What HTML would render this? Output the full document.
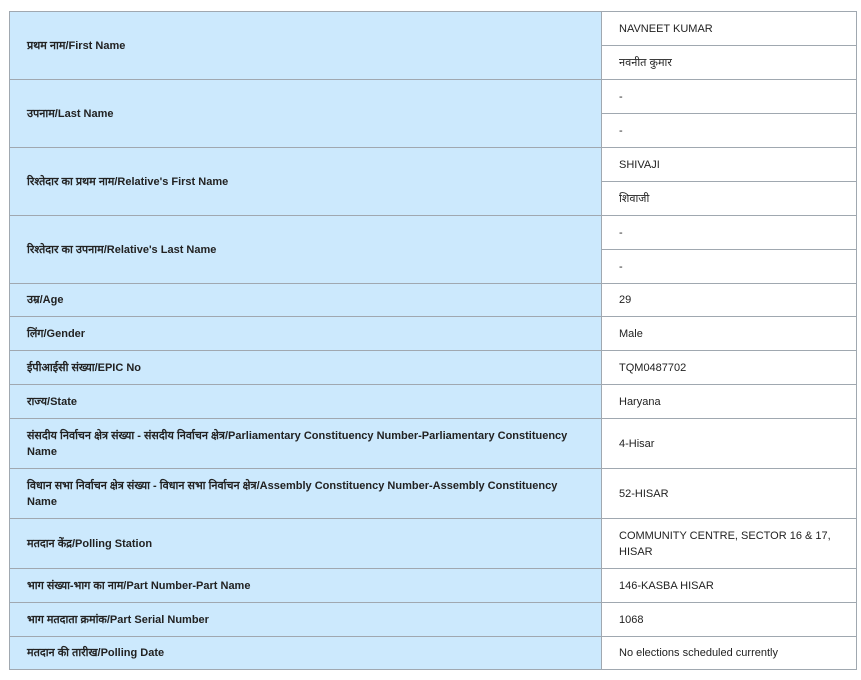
<!DOCTYPE html><html><head><meta charset="utf-8"><style>
body{margin:0;background:#fff;font-family:"Liberation Sans",sans-serif;font-size:11px;color:#222;}
.c{position:absolute;box-sizing:border-box;display:flex;align-items:center;border:1px solid #a0a8b0;}
.l{left:9px;width:593px;background:#cce9fd;font-weight:bold;padding:0 17px;line-height:16px;}
.r{left:601px;width:256px;background:#fff;padding:0 17px;line-height:16px;}
</style></head><body>
<div class="c l" style="top:11px;height:69px">प्रथम नाम/First Name</div>
<div class="c r" style="top:11px;height:35px">NAVNEET KUMAR</div>
<div class="c r" style="top:45px;height:35px">नवनीत कुमार</div>
<div class="c l" style="top:79px;height:69px">उपनाम/Last Name</div>
<div class="c r" style="top:79px;height:35px">-</div>
<div class="c r" style="top:113px;height:35px">-</div>
<div class="c l" style="top:147px;height:69px">रिश्तेदार का प्रथम नाम/Relative's First Name</div>
<div class="c r" style="top:147px;height:35px">SHIVAJI</div>
<div class="c r" style="top:181px;height:35px">शिवाजी</div>
<div class="c l" style="top:215px;height:69px">रिश्तेदार का उपनाम/Relative's Last Name</div>
<div class="c r" style="top:215px;height:35px">-</div>
<div class="c r" style="top:249px;height:35px">-</div>
<div class="c l" style="top:283px;height:34px">उम्र/Age</div>
<div class="c r" style="top:283px;height:34px">29</div>
<div class="c l" style="top:316px;height:35px">लिंग/Gender</div>
<div class="c r" style="top:316px;height:35px">Male</div>
<div class="c l" style="top:350px;height:35px">ईपीआईसी संख्या/EPIC No</div>
<div class="c r" style="top:350px;height:35px">TQM0487702</div>
<div class="c l" style="top:384px;height:35px">राज्य/State</div>
<div class="c r" style="top:384px;height:35px">Haryana</div>
<div class="c l" style="top:418px;height:51px">संसदीय निर्वाचन क्षेत्र संख्या - संसदीय निर्वाचन क्षेत्र/Parliamentary Constituency Number-Parliamentary Constituency Name</div>
<div class="c r" style="top:418px;height:51px">4-Hisar</div>
<div class="c l" style="top:468px;height:51px">विधान सभा निर्वाचन क्षेत्र संख्या - विधान सभा निर्वाचन क्षेत्र/Assembly Constituency Number-Assembly Constituency Name</div>
<div class="c r" style="top:468px;height:51px">52-HISAR</div>
<div class="c l" style="top:518px;height:51px">मतदान केंद्र/Polling Station</div>
<div class="c r" style="top:518px;height:51px">COMMUNITY CENTRE, SECTOR 16 &amp; 17, HISAR</div>
<div class="c l" style="top:568px;height:35px">भाग संख्या-भाग का नाम/Part Number-Part Name</div>
<div class="c r" style="top:568px;height:35px">146-KASBA HISAR</div>
<div class="c l" style="top:602px;height:35px">भाग मतदाता क्रमांक/Part Serial Number</div>
<div class="c r" style="top:602px;height:35px">1068</div>
<div class="c l" style="top:636px;height:34px">मतदान की तारीख/Polling Date</div>
<div class="c r" style="top:636px;height:34px">No elections scheduled currently</div>
</body></html>
